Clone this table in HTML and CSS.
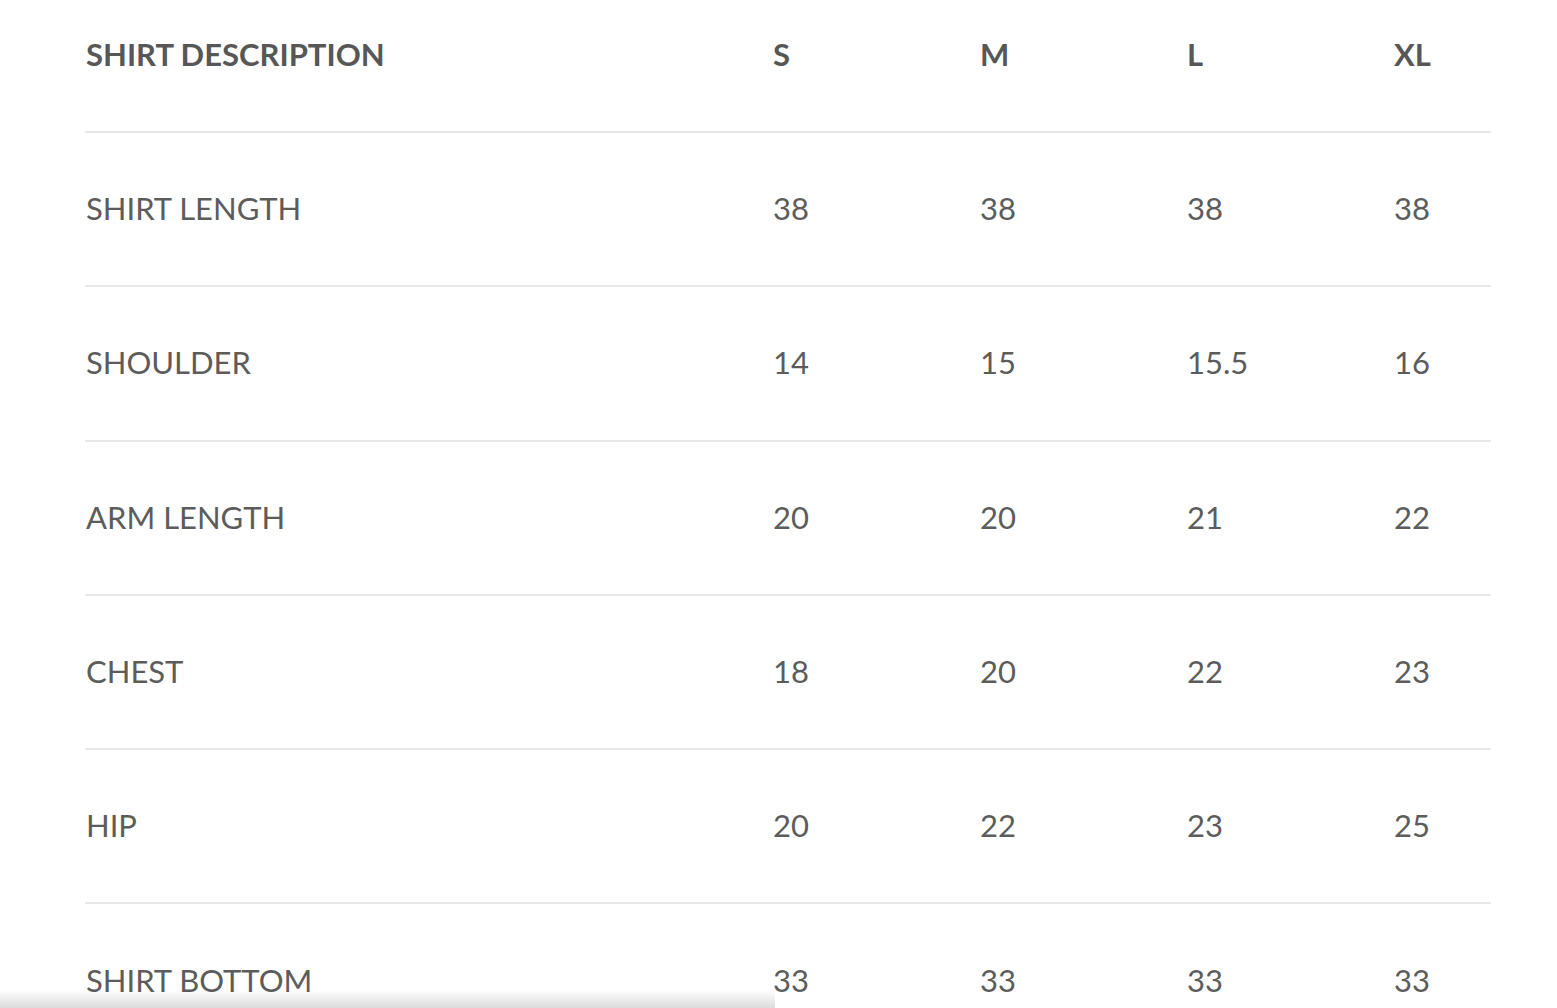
FILE: index.html
```html
<!DOCTYPE html>
<html lang="en">
<head>
<meta charset="utf-8">
<title>Size Chart</title>
<link rel="stylesheet" href="styles.css">
</head>
<body>
<div class="page">
  <div class="size-table">
    <div class="row head">
      <div class="cell desc">SHIRT DESCRIPTION</div>
      <div class="cell">S</div>
      <div class="cell">M</div>
      <div class="cell">L</div>
      <div class="cell">XL</div>
    </div>
    <div class="row">
      <div class="cell desc">SHIRT LENGTH</div>
      <div class="cell">38</div><div class="cell">38</div><div class="cell">38</div><div class="cell">38</div>
    </div>
    <div class="row">
      <div class="cell desc">SHOULDER</div>
      <div class="cell">14</div><div class="cell">15</div><div class="cell">15.5</div><div class="cell">16</div>
    </div>
    <div class="row">
      <div class="cell desc">ARM LENGTH</div>
      <div class="cell">20</div><div class="cell">20</div><div class="cell">21</div><div class="cell">22</div>
    </div>
    <div class="row">
      <div class="cell desc">CHEST</div>
      <div class="cell">18</div><div class="cell">20</div><div class="cell">22</div><div class="cell">23</div>
    </div>
    <div class="row">
      <div class="cell desc">HIP</div>
      <div class="cell">20</div><div class="cell">22</div><div class="cell">23</div><div class="cell">25</div>
    </div>
    <div class="row">
      <div class="cell desc">SHIRT BOTTOM</div>
      <div class="cell">33</div><div class="cell">33</div><div class="cell">33</div><div class="cell">33</div>
    </div>
  </div>
</div>
<div class="bottom-shade"></div>
</body>
</html>
```

FILE: styles.css
```css
html, body {
  margin: 0;
  padding: 0;
  background: #ffffff;
  overflow: hidden;
}

body {
  font-family: Lato, "Open Sans", sans-serif;
  color: #5c5c5c;
  height: 1008px;
}

.page {
  padding-left: 85px;
  width: 1406px;
}

.size-table {
  display: flex;
  flex-direction: column;
}

.row {
  display: grid;
  grid-template-columns: 688px 207px 207px 207px 1fr;
  align-items: center;
  height: 152.3px;
  border-top: 2px solid #e8e8e8;
  font-size: 31px;
  font-weight: 400;
}

.row.head {
  height: 131px;
  border-top: none;
  align-items: start;
  font-weight: 700;
  color: #575757;
}

.cell {
  line-height: 36px;
  white-space: nowrap;
  position: relative;
  top: -1px;
}

.row.head .cell {
  margin-top: 36px;
  top: 0;
}

.desc {
  padding-left: 1px;
}

.bottom-shade {
  position: fixed;
  left: 0;
  bottom: 0;
  width: 775px;
  height: 18px;
  background: linear-gradient(to bottom, rgba(0, 0, 0, 0), rgba(0, 0, 0, 0.14));
}
```
